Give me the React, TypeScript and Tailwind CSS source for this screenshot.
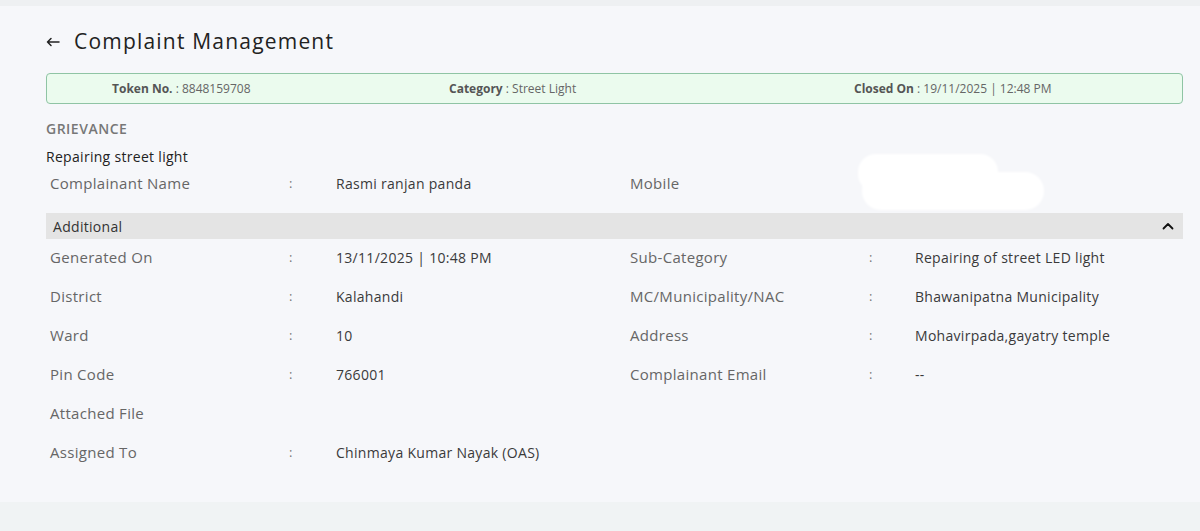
import React from "react";

const font = { fontFamily: '"Open Sans", "Noto Sans", sans-serif' };

function Row({ a, av, b, bv, noColon }: { a: string; av?: string; b?: string; bv?: string; noColon?: boolean }) {
  return (
    <div className="grid grid-cols-[239px_47px_294px_239px_46px_1fr] items-center h-[39px] pl-[4px]">
      <div className="text-[15px] tracking-[0.3px] text-[#666]">{a}</div>
      <div className="text-[13px] text-[#777]">{noColon ? "" : ":"}</div>
      <div className="text-[14px] tracking-[0.3px] text-[#3a3a3a]">{av}</div>
      <div className="text-[15px] tracking-[0.3px] text-[#666]">{b}</div>
      <div className="text-[13px] text-[#777]">{b ? ":" : ""}</div>
      <div className="text-[14px] tracking-[0.3px] text-[#3a3a3a]">{bv}</div>
    </div>
  );
}

export default function App() {
  return (
    <div className="w-[1200px] h-[531px] bg-[#f0f3f4] overflow-hidden" style={font}>
      <div className="h-[6px] bg-[#eef0f2]" />
      <div className="bg-[#f6f7fa] h-[496px] pl-[46px] pr-[17px] pt-[22px]">
        <div className="flex items-center h-[28px]">
          <svg width="14" height="10" viewBox="0 0 14 10" className="mr-[14px]">
            <path d="M13 5H1.5M5 1.5L1.5 5L5 8.5" fill="none" stroke="#222" strokeWidth="1.5" strokeLinecap="round" strokeLinejoin="round" />
          </svg>
          <div className="text-[21px] text-[#222] font-medium tracking-[1.2px]">Complaint Management</div>
        </div>
        <div className="mt-[17px] h-[31px] border border-[#8fc4a4] bg-[#ebfbee] rounded-[4px] flex items-center text-[12px] pl-[65px]">
          <div className="w-[337px]"><span className="font-bold text-[#555]">Token No.</span><span className="text-[#666]"> : 8848159708</span></div>
          <div className="w-[405px]"><span className="font-bold text-[#555]">Category</span><span className="text-[#666]"> : Street Light</span></div>
          <div><span className="font-bold text-[#555]">Closed On</span><span className="text-[#666]"> : 19/11/2025 | 12:48 PM</span></div>
        </div>
        <div className="mt-[14px] text-[14px] tracking-[0.5px] font-semibold text-[#777] h-[20px] flex items-center">GRIEVANCE</div>
        <div className="mt-[9px] text-[14px] tracking-[0.3px] text-[#222] h-[18px] flex items-center">Repairing street light</div>
        <div className="relative">
          <div className="h-[7px]" />
          <div className="grid grid-cols-[239px_47px_294px_239px_46px_1fr] items-center h-[20px] pl-[4px]">
            <div className="text-[15px] tracking-[0.3px] text-[#666]">Complainant Name</div>
            <div className="text-[13px] text-[#777]">:</div>
            <div className="text-[14px] tracking-[0.3px] text-[#3a3a3a]">Rasmi ranjan panda</div>
            <div className="text-[15px] tracking-[0.3px] text-[#666]">Mobile</div>
            <div className="text-[13px] text-[#777]">:</div>
            <div />
          </div>
          <div className="absolute left-[812px] top-[-11px] w-[140px] h-[38px] bg-white rounded-[18px] blur-[1px]" />
          <div className="absolute left-[816px] top-[7px] w-[182px] h-[38px] bg-white rounded-[20px] blur-[1px]" />
        </div>
        <div className="mt-[21px] h-[26px] bg-[#e4e4e4] flex items-center justify-between pl-[7px] pr-[9px]">
          <div className="text-[14px] tracking-[0.3px] text-[#333]">Additional</div>
          <svg width="12" height="8" viewBox="0 0 12 8">
            <path d="M1.5 6.5L6 2L10.5 6.5" fill="none" stroke="#111" strokeWidth="1.8" strokeLinecap="round" strokeLinejoin="round" />
          </svg>
        </div>
        <div className="mt-[-1px]">
          <Row a="Generated On" av="13/11/2025 | 10:48 PM" b="Sub-Category" bv="Repairing of street LED light" />
          <Row a="District" av="Kalahandi" b="MC/Municipality/NAC" bv="Bhawanipatna Municipality" />
          <Row a="Ward" av="10" b="Address" bv="Mohavirpada,gayatry temple" />
          <Row a="Pin Code" av="766001" b="Complainant Email" bv="--" />
          <Row a="Attached File" noColon />
          <Row a="Assigned To" av="Chinmaya Kumar Nayak (OAS)" />
        </div>
      </div>
    </div>
  );
}
